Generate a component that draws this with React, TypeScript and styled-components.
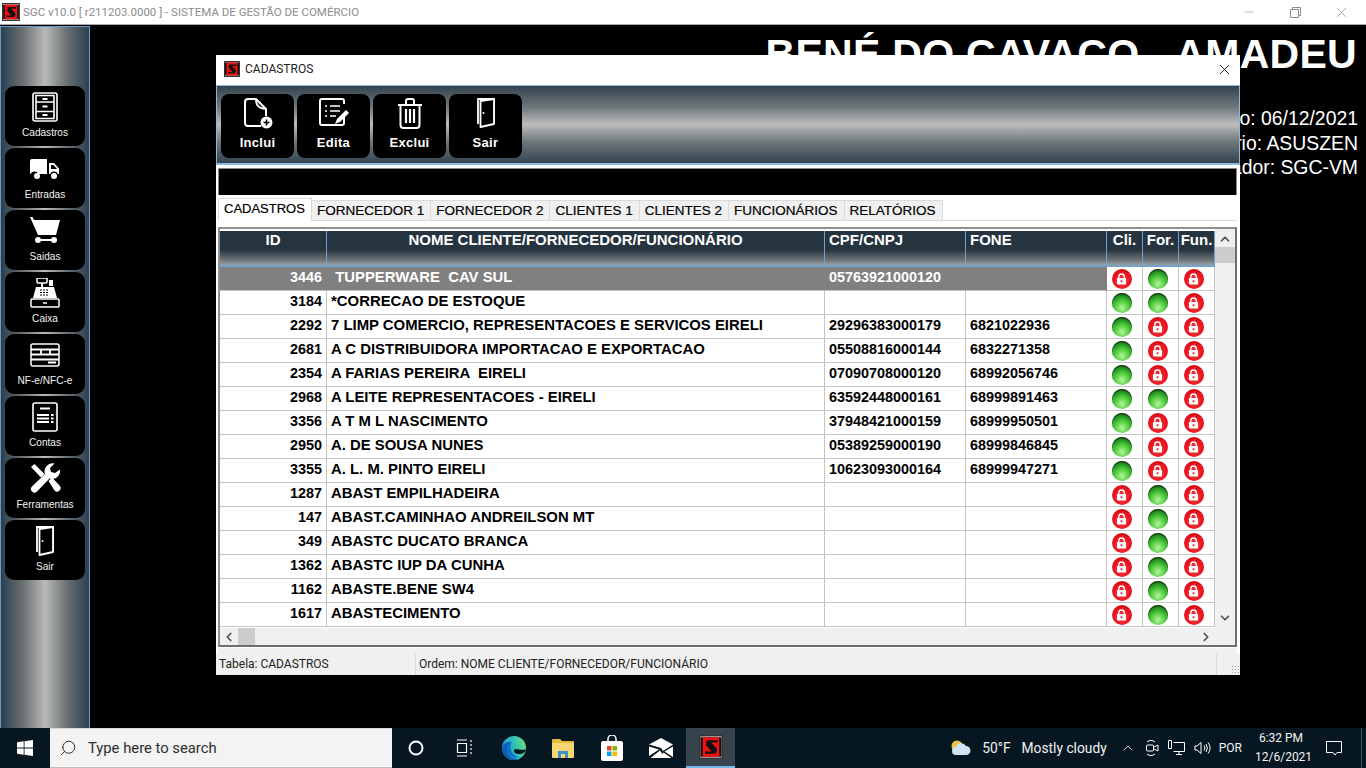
import React from 'react';
import styled, { createGlobalStyle } from 'styled-components';
import { Search, ChevronUp, ChevronDown, ChevronLeft, ChevronRight, X, Minus } from 'lucide-react';

const GlobalStyle = createGlobalStyle`
    html, body {
        margin: 0;
        padding: 0;
        background: #000;
        overflow: hidden;
    }
    * {
        box-sizing: border-box;
    }
`;

const Screen = styled.div`
    width: 1366px;
    height: 768px;
    display: flex;
    flex-direction: column;
    position: relative;
    overflow: hidden;
    font-family: 'Liberation Sans', Arial, sans-serif;
`;

const AppTitleBar = styled.div`
    height: 25px;
    flex: none;
    display: flex;
    align-items: center;
    background: #fff;
    border-bottom: 1px solid #a9a9a9;
    padding-left: 2px;
`;

const AppTitle = styled.span`
    font-family: Roboto, sans-serif;
    font-size: 11.5px;
    color: #8c8c8c;
    margin-left: 3px;
    flex: 1;
    white-space: nowrap;
`;

const WinControls = styled.div`
    display: flex;
    align-items: center;
    color: #8c8c8c;
    margin-right: 2px;
`;

const WinControl = styled.span`
    width: 46px;
    height: 20px;
    display: flex;
    align-items: center;
    justify-content: center;
`;

const Desktop = styled.div`
    flex: 1;
    display: flex;
    background: #000;
    min-height: 0;
`;

const Sidebar = styled.div`
    width: 90px;
    flex: none;
    margin-top: 1px;
    padding: 59px 4px 0 5px;
    display: flex;
    flex-direction: column;
    gap: 2px;
    border: 1px solid #6b9ac4;
    border-width: 1px 1px 0 1px;
    background: linear-gradient(90deg, #2b3f50 0%, #6a7072 25%, #b9b9b9 50%, #6a7072 75%, #2b3f50 100%);
`;

const SideButton = styled.div`
    width: 80px;
    height: 60px;
    margin-left: -1px;
    flex: none;
    background: #000;
    border-radius: 9px;
    color: #fff;
    display: flex;
    flex-direction: column;
    align-items: center;
    padding-top: 5px;
`;

const SideIcon = styled.div`
    height: 31px;
    display: flex;
    align-items: center;
    justify-content: center;
`;

const SideLabel = styled.span`
    font-size: 10.1px;
    line-height: 12px;
    margin-top: 5px;
    color: #f2f2f2;
    white-space: nowrap;
`;

const Backdrop = styled.div`
    flex: 1;
    display: flex;
    flex-direction: column;
    align-items: flex-end;
    padding: 2px 9px 0 0;
    color: #fff;
`;

const Company = styled.div`
    font-size: 41px;
    line-height: 54px;
    font-weight: bold;
    letter-spacing: 0.3px;
    white-space: nowrap;
    margin-bottom: 25px;
`;

const InfoLine = styled.div`
    font-size: 19.4px;
    line-height: 24.5px;
    white-space: nowrap;
    margin-right: -1px;
`;

const Win = styled.div`
    position: absolute;
    left: 216px;
    top: 55px;
    width: 1024px;
    height: 620px;
    background: #f0f0f0;
    display: flex;
    flex-direction: column;
`;

const WinTitle = styled.div`
    height: 30px;
    flex: none;
    background: #fff;
    display: flex;
    align-items: center;
    padding: 0 7px 2px 8px;
    font-family: Roboto, sans-serif;
    font-size: 12px;
    color: #222;
    gap: 5px;
    span {
        flex: 1;
    }
`;

const Toolbar = styled.div`
    height: 80px;
    flex: none;
    display: flex;
    gap: 3px;
    padding: 8px 0 0 4px;
    border: 1px solid #8fb7d8;
    border-width: 1px 1px 2px 1px;
    background: linear-gradient(180deg, #33444f 0%, #70787c 28%, #bdbdbd 50%, #70787c 72%, #33444f 100%);
`;

const ToolButton = styled.div`
    width: 73px;
    height: 64px;
    background: #000;
    border-radius: 8px;
    color: #fff;
    display: flex;
    flex-direction: column;
    align-items: center;
    padding-top: 4px;
`;

const ToolIcon = styled.div`
    height: 32px;
    display: flex;
    justify-content: center;
`;

const ToolLabel = styled.span`
    font-size: 13px;
    font-weight: bold;
    line-height: 15px;
    margin-top: 5px;
    letter-spacing: 0.3px;
`;

const WinBody = styled.div`
    flex: 1;
    display: flex;
    flex-direction: column;
    background: #fff;
    padding: 3px 3px 0 2px;
    min-height: 0;
`;

const BlackBar = styled.div`
    height: 27px;
    flex: none;
    background: #000;
    border: 1px solid #8a8a8a;
    border-bottom: none;
`;

const Tabs = styled.div`
    display: flex;
    align-items: flex-end;
    height: 25px;
    flex: none;
`;

const Tab = styled.div<{ $active?: boolean }>`
    height: ${(p) => (p.$active ? '23px' : '20px')};
    padding: ${(p) => (p.$active ? '0 6px 3px 5px' : '0 6px 0 5px')};
    margin-bottom: ${(p) => (p.$active ? '-1px' : '0')};
    position: relative;
    display: flex;
    align-items: center;
    font-size: ${(p) => (p.$active ? '13px' : '13.5px')};
    -webkit-text-stroke: 0.2px #000;
    color: #000;
    white-space: nowrap;
    background: ${(p) => (p.$active ? '#fff' : '#f0f0f0')};
    border: 1px solid #d9d9d9;
    border-width: ${(p) => (p.$active ? '1px 1px 0 1px' : '1px 1px 0 0')};
`;

const TabPage = styled.div`
    flex: 1;
    border-top: 1px solid #d9d9d9;
    padding-top: 6px;
    display: flex;
    flex-direction: column;
    min-height: 0;
    background: linear-gradient(#fff 0 6px, #f0f0f0 6px);
`;

const GridFrame = styled.div`
    height: 420px;
    flex: none;
    background: #fff;
    border: 2px solid #8f8f8f;
    border-right-color: #6e6e6e;
    border-bottom-color: #6e6e6e;
    box-shadow: 1px 1px 0 #fff;
    display: grid;
    grid-template-columns: 1fr 20px;
    grid-template-rows: 1fr 17px;
    overflow: hidden;
`;

const GridMain = styled.div`
    padding-top: 2px;
    overflow: hidden;
`;

const Columns = styled.div`
    display: grid;
    grid-template-columns: 107px 498px 141px 141px 36px 36px 36px;
`;

const HeadCell = styled.div<{ $center?: boolean }>`
    height: 36px;
    background: linear-gradient(180deg, #25343f 0%, #25343f 55%, #6d7479 85%, #9a9fa2 100%);
    border-right: 1px solid #74a2cc;
    border-bottom: 2px solid #74a2cc;
    color: #fff;
    font-size: 15px;
    font-weight: bold;
    line-height: 18px;
    padding-left: ${(p) => (p.$center ? '0' : '4px')};
    text-align: ${(p) => (p.$center ? 'center' : 'left')};
    white-space: nowrap;
    overflow: hidden;
`;

const Cell = styled.div<{ $selected?: boolean; $right?: boolean; $wide?: boolean }>`
    height: 24px;
    padding: ${(p) => (p.$right ? '0 4px 0 0' : '0 0 0 4px')};
    text-align: ${(p) => (p.$right ? 'right' : 'left')};
    background: ${(p) => (p.$selected ? '#808080' : '#fff')};
    color: ${(p) => (p.$selected ? '#fff' : '#000')};
    border-right: 1px solid ${(p) => (p.$selected ? '#808080' : '#c4c4c4')};
    border-bottom: 1px solid #c4c4c4;
    font-size: ${(p) => (p.$wide ? '14.9px' : '14.4px')};
    font-weight: bold;
    line-height: 20px;
    white-space: pre;
    overflow: hidden;
`;

const OrbCell = styled.div`
    height: 24px;
    padding-right: 6px;
    border-right: 1px solid #c4c4c4;
    border-bottom: 1px solid #c4c4c4;
    display: flex;
    align-items: center;
    justify-content: center;
`;

const Orb = styled.span<{ $on: boolean }>`
    width: 20px;
    height: 20px;
    border-radius: 50%;
    display: flex;
    align-items: center;
    justify-content: center;
    background: ${(p) =>
        p.$on
            ? 'radial-gradient(circle at 50% 75%, #b8f7a0 0%, #62d44a 32%, #2ea825 58%, #187018 78%, #14301a 100%)'
            : 'radial-gradient(circle at 50% 62%, #f53a3a 0%, #e8101c 62%, #a8000a 100%)'};
    box-shadow: ${(p) => (p.$on ? 'inset 0 1px 1px #1a2a1a' : 'none')};
`;

const VScroll = styled.div`
    grid-row: 1;
    grid-column: 2;
    background: #f0f0f0;
    display: flex;
    flex-direction: column;
    align-items: center;
    color: #505050;
    padding: 2px 0;
`;

const ScrollArrow = styled.div`
    height: 16px;
    display: flex;
    align-items: center;
    justify-content: center;
    flex: none;
`;

const VThumb = styled.div`
    width: 100%;
    height: 16px;
    background: #cdcdcd;
    flex: none;
`;

const VTrack = styled.div`
    flex: 1;
`;

const HScroll = styled.div`
    grid-row: 2;
    grid-column: 1;
    background: #f0f0f0;
    display: flex;
    align-items: center;
    color: #505050;
`;

const HArrow = styled.div`
    width: 18px;
    display: flex;
    justify-content: center;
    flex: none;
`;

const HThumb = styled.div`
    width: 17px;
    height: 100%;
    background: #cdcdcd;
    flex: none;
`;

const Corner = styled.div`
    grid-row: 2;
    grid-column: 2;
    background: #f0f0f0;
`;

const StatusBar = styled.div`
    height: 21px;
    flex: none;
    margin: 7px -3px 0 -2px;
    background: #f0f0f0;
    display: flex;
    font-family: Roboto, sans-serif;
    font-size: 12px;
    color: #222;
`;

const StatusPane = styled.div<{ $width?: number }>`
    ${(p) => (p.$width ? `width: ${p.$width}px;` : 'flex: 1;')}
    flex-shrink: 0;
    display: flex;
    align-items: center;
    padding: 0 0 1px 3px;
    border-right: 1px solid #d9d9d9;
    white-space: nowrap;
`;

const Grip = styled.div`
    flex: 1;
    position: relative;
    &::after {
        content: '';
        position: absolute;
        right: 1px;
        bottom: 2px;
        width: 8px;
        height: 8px;
        background: radial-gradient(circle, #a5a5a5 1px, transparent 1px) 0 0 / 3px 3px;
    }
`;

const Taskbar = styled.div`
    height: 40px;
    flex: none;
    background: #071721;
    display: flex;
    align-items: center;
    color: #fff;
`;

const StartButton = styled.div`
    width: 50px;
    height: 40px;
    display: flex;
    align-items: center;
    justify-content: center;
`;

const SearchBox = styled.div`
    width: 342px;
    height: 40px;
    margin-right: -1px;
    background: #f3f3f3;
    border-bottom: 1px solid #bdbdbd;
    border-top: 1px solid #d8d8d8;
    display: flex;
    align-items: center;
    gap: 11px;
    padding-left: 9px;
    color: #2d2d2d;
    font-family: Roboto, sans-serif;
    font-size: 14.8px;
`;

const TaskIcon = styled.div<{ $active?: boolean }>`
    width: 49px;
    height: 40px;
    margin-left: ${(p) => (p.$active ? '1px' : '0')};
    display: flex;
    align-items: center;
    justify-content: center;
    background: ${(p) => (p.$active ? '#37444d' : 'transparent')};
    border-bottom: ${(p) => (p.$active ? '2px solid #76b9ed' : 'none')};
`;

const Tray = styled.div`
    margin-left: auto;
    display: flex;
    align-items: center;
    font-family: Roboto, sans-serif;
    font-size: 13.8px;
    color: #f2f2f2;
    height: 40px;
`;

const Weather = styled.div`
    display: flex;
    align-items: center;
    white-space: nowrap;
    gap: 11px;
    margin-right: 13px;
`;

const TrayIcons = styled.div`
    display: flex;
    align-items: center;
    gap: 9px;
    margin-right: 8px;
`;

const Lang = styled.span`
    font-size: 12px;
    margin-right: 13px;
`;

const Clock = styled.div`
    font-size: 12px;
    line-height: 19px;
    text-align: center;
    width: 52px;
`;

const Notify = styled.div`
    width: 54px;
    display: flex;
    justify-content: center;
`;

const ShowDesktop = styled.div`
    width: 5px;
    height: 40px;
    border-left: 1px solid #4a5860;
`;

const Logo = ({ size = 16 }: { size?: number }) => (
    <svg width={size} height={size} viewBox="0 0 16 16">
        <rect x="0.5" y="0.5" width="15" height="15" fill="#fff" stroke="#333" />
        <rect x="1" y="1.500" width="14" height="13" fill="#111" />
        <rect x="2.500" y="1.500" width="11" height="13" fill="#f01010" />
        <path d="M5.500 3.500H12.500v1.500H8.200L11.800 9v2l-1.200 1.500H4V11h4.300L4.800 7V4.500z" fill="#111" />
    </svg>
);

const Door = ({ height = 30 }: { height?: number }) => (
    <svg width={height * 0.6} height={height} viewBox="0 0 18 30" fill="none" stroke="#fff" strokeWidth="1.800">
        <path d="M1 26V1h16v25" />
        <path d="M3.500 3 17 1v25L3.500 29z" fill="#000" strokeLinejoin="round" />
        <circle cx="6.500" cy="15" r="1" fill="#fff" stroke="none" />
    </svg>
);

const IconCadastros = () => (
    <svg width="26" height="30" viewBox="0 0 26 30" fill="none" stroke="#fff" strokeWidth="1.6">
        <rect x="1" y="1" width="24" height="28" rx="2" />
        <path d="M4 10h18M4 19.500h18M4 3.500h18v23H4z" />
        <path d="M10.500 7h5M10.500 14.500h5M10.500 23h5" strokeWidth="2" />
    </svg>
);

const IconTruck = () => (
    <svg width="30" height="22" viewBox="0 0 30 22" fill="#fff">
        <path d="M0 3a2 2 0 0 1 2-2h15v15H8.500a4.500 4.500 0 0 0-8 0H0z" />
        <path d="M19 5h5l5 5.500V16h-1a4.500 4.500 0 0 0-8 0h-1zM21 7v4h6l-3.500-4z" fillRule="evenodd" />
        <circle cx="7" cy="18" r="3" />
        <circle cx="24" cy="18" r="3" />
    </svg>
);

const IconCart = () => (
    <svg width="30" height="27" viewBox="0 0 30 27" fill="#fff">
        <path d="M0 0h2.500l1.500 3h26l-4 15H8z" />
        <path d="M8 23h16" stroke="#fff" strokeWidth="2" />
        <circle cx="8" cy="23" r="3" />
        <circle cx="24" cy="23" r="3" />
    </svg>
);

const IconRegister = () => (
    <svg width="30" height="30" viewBox="0 0 30 30" fill="#fff">
        <rect x="7" y="0" width="10" height="5" rx="1" fill="none" stroke="#fff" strokeWidth="1.500" />
        <rect x="19" y="2" width="4" height="6" />
        <rect x="11" y="5" width="2" height="4" />
        <path d="M6 9h18l3 11H3z" />
        <path d="M10 12h2M13 12h2M16 12h2M10 14.500h2M13 14.500h2M16 14.500h2M10 17h2M13 17h2M16 17h2" stroke="#000" strokeWidth="1" />
        <rect x="1" y="21" width="28" height="8" rx="1" fill="none" stroke="#fff" strokeWidth="1.500" />
        <path d="M13 25h4" stroke="#fff" strokeWidth="1.500" />
    </svg>
);

const IconInvoice = () => (
    <svg width="30" height="24" viewBox="0 0 30 24" fill="none" stroke="#fff" strokeWidth="1.500">
        <rect x="1" y="1" width="28" height="22" rx="2" />
        <path d="M1 6.500h28M1 11.500h28M1 16.500h28M11 6.500v5M20 6.500v5" strokeWidth="1.800" />
        <rect x="18" y="18.500" width="8" height="2" fill="#fff" stroke="none" />
    </svg>
);

const IconContas = () => (
    <svg width="26" height="30" viewBox="0 0 26 30" fill="none" stroke="#fff" strokeWidth="1.6">
        <rect x="1" y="1" width="24" height="28" rx="2" />
        <path d="M8 6.500h10M5 13h12M5 16.500h12M5 20h12M19 13h2.500M19 16.500h2.500M19 20h2.500" strokeWidth="2" />
    </svg>
);

const IconTools = () => (
    <svg width="31" height="31" viewBox="0 0 31 31" fill="#fff">
        <path d="M30 6.500a8 8 0 0 1-10.500 9L7 28.500a3.500 3.500 0 0 1-5-5L15 11A8 8 0 0 1 24.500.5L20 5l1 4 4 1z" />
        <path d="M1 4 4.500 1l10 10-3.500 3.500zM18.500 18l3.500-3.500 7.500 8a3.500 3.500 0 0 1-5 5z" />
    </svg>
);

const IconNew = () => (
    <svg width="32" height="32" viewBox="0 0 32 32" fill="none" stroke="#fff" strokeWidth="2">
        <path d="M19 28H6a3 3 0 0 1-3-3V4a3 3 0 0 1 3-3h8l10 10v7" />
        <path d="M14 1c0 6 2 9 10 10" />
        <circle cx="24.500" cy="24.500" r="6" fill="#fff" stroke="none" />
        <path d="M24.500 21.500v6M21.500 24.500h6" stroke="#000" strokeWidth="1.6" />
    </svg>
);

const IconEdit = () => (
    <svg width="32" height="31" viewBox="0 0 32 31" fill="none" stroke="#fff" strokeWidth="2">
        <path d="M26 18v7a2 2 0 0 1-2 2H4a2 2 0 0 1-2-2V3a2 2 0 0 1 2-2h20a2 2 0 0 1 2 2v3" />
        <path d="M7 8h2M12 8h10M7 13h2M12 13h10M7 18h2M12 18h6" strokeWidth="1.700" />
        <path d="M17 26l2-5 9-9 3 3-9 9z" fill="#fff" stroke="none" />
    </svg>
);

const IconTrash = () => (
    <svg width="26" height="31" viewBox="0 0 26 31" fill="none" stroke="#fff" strokeWidth="2">
        <path d="M1 7h24M9 7V3a2 2 0 0 1 2-2h4a2 2 0 0 1 2 2v4" />
        <path d="M3.500 7v20a3 3 0 0 0 3 3h13a3 3 0 0 0 3-3V7" />
        <path d="M9 11v14M13 11v14M17 11v14" strokeWidth="2.200" />
    </svg>
);

const LockGlyph = () => (
    <svg width="11" height="12" viewBox="0 0 12 13">
        <path d="M3 6V4a3 3 0 0 1 6 0v2" fill="none" stroke="#fff" strokeWidth="1.500" />
        <rect x="1" y="5.500" width="10" height="7" rx="1" fill="#fff" />
        <circle cx="6" cy="9" r="1.100" fill="#e4141e" />
    </svg>
);

const WindowsLogo = () => (
    <svg width="16" height="16" viewBox="0 0 16 16" fill="#fff">
        <path d="M0 2.300 6.700 1.300v6.300H0zM7.500 1.200 16 0v7.600H7.500zM0 8.400h6.700v6.300L0 13.700zM7.500 8.400H16V16l-8.500-1.200z" />
    </svg>
);

const Edge = () => (
    <svg width="24" height="24" viewBox="0 0 24 24">
        <defs>
            <linearGradient id="edgeTop" x1="0" y1="0.600" x2="1" y2="0.300">
                <stop offset="0" stopColor="#1b9de2" />
                <stop offset="0.600" stopColor="#33c4b0" />
                <stop offset="1" stopColor="#6fdc7a" />
            </linearGradient>
        </defs>
        <circle cx="12" cy="12" r="12" fill="url(#edgeTop)" />
        <path d="M24 13.500c-.5 2.500-3 4.500-7 4.500-3 0-5-1-5-3 0-1 .5-1.500 1-2 4 .5 8 1 11 .5z" fill="#071721" />
        <path d="M0 12C1 7 6 5 10 6 6.500 7 5 10 5 13.500 5 19 10 23 15.500 23c2 0 3.500-.5 5-1.500A12 12 0 0 1 12 24 12 12 0 0 1 0 12z" fill="#0d5fb3" />
        <path d="M5 13.500C5 10 6.500 7 10 6c-1.500 2-2 5-1 8 1 3 4 6.500 8 7-1 .5-1.500.5-2 .5C10 22 5 18.500 5 13.500z" fill="#1170c8" />
    </svg>
);

const Explorer = () => (
    <svg width="22" height="20" viewBox="0 0 22 20">
        <path d="M0 2a1 1 0 0 1 1-1h7l2 2h11a1 1 0 0 1 1 1v2H0z" fill="#e8b93a" />
        <rect x="0" y="5" width="22" height="15" rx="1" fill="#f7d774" />
        <path d="M6 13h10v7h-3v-4H9v4H6z" fill="#3f8fc9" />
    </svg>
);

const Store = () => (
    <svg width="22" height="26" viewBox="0 0 22 26">
        <path d="M7 6V4a4 4 0 0 1 8 0v2" fill="none" stroke="#fff" strokeWidth="1.500" />
        <rect x="0" y="6" width="22" height="20" rx="2" fill="#fff" />
        <rect x="6" y="11" width="4.500" height="4.500" fill="#e2492b" />
        <rect x="11.500" y="11" width="4.500" height="4.500" fill="#7fba00" />
        <rect x="6" y="16.500" width="4.500" height="4.500" fill="#00a4ef" />
        <rect x="11.500" y="16.500" width="4.500" height="4.500" fill="#ffb900" />
    </svg>
);

const Mail = () => (
    <svg width="24" height="20" viewBox="0 0 24 20" fill="#fff">
        <path d="M12 0 24 6.500 14 13 12 10 0 6.500z" />
        <path d="M0 8.500 10 11.500 0 18zM24 8.500V19L15.500 13.500zM11 12.500 13.500 16 14.500 14.500 22.500 20H1.500z" />
    </svg>
);

const Cloud = () => (
    <svg width="21" height="16" viewBox="0 0 21 16">
        <circle cx="7" cy="6" r="5.500" fill="#f2c14b" />
        <path d="M6 15a4 4 0 0 1 0-8 5.500 5.500 0 0 1 10-1 4.500 4.500 0 0 1 0 9z" fill="#cfe4f5" />
    </svg>
);

const sideItems: { label: string; icon: React.ReactNode }[] = [
    { label: 'Cadastros', icon: <IconCadastros /> },
    { label: 'Entradas', icon: <IconTruck /> },
    { label: 'Saidas', icon: <IconCart /> },
    { label: 'Caixa', icon: <IconRegister /> },
    { label: 'NF-e/NFC-e', icon: <IconInvoice /> },
    { label: 'Contas', icon: <IconContas /> },
    { label: 'Ferramentas', icon: <IconTools /> },
    { label: 'Sair', icon: <Door /> },
];

const toolItems: { label: string; icon: React.ReactNode }[] = [
    { label: 'Inclui', icon: <IconNew /> },
    { label: 'Edita', icon: <IconEdit /> },
    { label: 'Exclui', icon: <IconTrash /> },
    { label: 'Sair', icon: <Door /> },
];

const tabs = ['CADASTROS', 'FORNECEDOR 1', 'FORNECEDOR 2', 'CLIENTES 1', 'CLIENTES 2', 'FUNCIONÁRIOS', 'RELATÓRIOS'];

const rows: [string, string, string, string, string][] = [
    ['3446', ' TUPPERWARE  CAV SUL', '05763921000120', '', 'RGR'],
    ['3184', '*CORRECAO DE ESTOQUE', '', '', 'GGR'],
    ['2292', '7 LIMP COMERCIO, REPRESENTACOES E SERVICOS EIRELI', '29296383000179', '6821022936', 'GRR'],
    ['2681', 'A C DISTRIBUIDORA IMPORTACAO E EXPORTACAO', '05508816000144', '6832271358', 'GRR'],
    ['2354', 'A FARIAS PEREIRA  EIRELI', '07090708000120', '68992056746', 'GRR'],
    ['2968', 'A LEITE REPRESENTACOES - EIRELI', '63592448000161', '68999891463', 'GGR'],
    ['3356', 'A T M L NASCIMENTO', '37948421000159', '68999950501', 'GRR'],
    ['2950', 'A. DE SOUSA NUNES', '05389259000190', '68999846845', 'GRR'],
    ['3355', 'A. L. M. PINTO EIRELI', '10623093000164', '68999947271', 'GRR'],
    ['1287', 'ABAST EMPILHADEIRA', '', '', 'RGR'],
    ['147', 'ABAST.CAMINHAO ANDREILSON MT', '', '', 'RGR'],
    ['349', 'ABASTC DUCATO BRANCA', '', '', 'RGR'],
    ['1362', 'ABASTC IUP DA CUNHA', '', '', 'RGR'],
    ['1162', 'ABASTE.BENE SW4', '', '', 'RGR'],
    ['1617', 'ABASTECIMENTO', '', '', 'RGR'],
];

function App() {
    return (
        <Screen>
            <GlobalStyle />
            <AppTitleBar>
                <Logo size={18} />
                <AppTitle>SGC v10.0 [ r211203.0000 ] - SISTEMA DE GESTÃO DE COMÉRCIO</AppTitle>
                <WinControls>
                    <WinControl><Minus size={14} strokeWidth={1} /></WinControl>
                    <WinControl>
                        <svg width="11" height="11" viewBox="0 0 11 11" fill="none" stroke="#8c8c8c">
                            <path d="M.5 2.500h8v8h-8zM2.500 2.500v-2h8v8h-2" />
                        </svg>
                    </WinControl>
                    <WinControl><X size={17} strokeWidth={1} /></WinControl>
                </WinControls>
            </AppTitleBar>
            <Desktop>
                <Sidebar>
                    {sideItems.map((item) => (
                        <SideButton key={item.label}>
                            <SideIcon>{item.icon}</SideIcon>
                            <SideLabel>{item.label}</SideLabel>
                        </SideButton>
                    ))}
                </Sidebar>
                <Backdrop>
                    <Company>BENÉ DO CAVACO - AMADEU</Company>
                    <InfoLine>Movimento: 06/12/2021</InfoLine>
                    <InfoLine>Usuário: ASUSZEN</InfoLine>
                    <InfoLine>Computador: SGC-VM</InfoLine>
                </Backdrop>
            </Desktop>
            <Win>
                <WinTitle>
                    <Logo />
                    <span>CADASTROS</span>
                    <X size={17} strokeWidth={1.2} color="#000" />
                </WinTitle>
                <Toolbar>
                    {toolItems.map((item) => (
                        <ToolButton key={item.label}>
                            <ToolIcon>{item.icon}</ToolIcon>
                            <ToolLabel>{item.label}</ToolLabel>
                        </ToolButton>
                    ))}
                </Toolbar>
                <WinBody>
                    <BlackBar />
                    <Tabs>
                        {tabs.map((t, i) => (
                            <Tab key={t} $active={i === 0}>{t}</Tab>
                        ))}
                    </Tabs>
                    <TabPage>
                        <GridFrame>
                            <GridMain>
                                <Columns>
                                    <HeadCell $center>ID</HeadCell>
                                    <HeadCell $center>NOME CLIENTE/FORNECEDOR/FUNCIONÁRIO</HeadCell>
                                    <HeadCell>CPF/CNPJ</HeadCell>
                                    <HeadCell>FONE</HeadCell>
                                    <HeadCell $center>Cli.</HeadCell>
                                    <HeadCell $center>For.</HeadCell>
                                    <HeadCell $center>Fun.</HeadCell>
                                    {rows.map((r, i) => (
                                        <React.Fragment key={r[0]}>
                                            <Cell $right $selected={i === 0}>{r[0]}</Cell>
                                            <Cell $wide $selected={i === 0}>{r[1]}</Cell>
                                            <Cell $selected={i === 0}>{r[2]}</Cell>
                                            <Cell $selected={i === 0}>{r[3]}</Cell>
                                            {r[4].split('').map((s, j) => (
                                                <OrbCell key={j}>
                                                    <Orb $on={s === 'G'}>{s === 'R' && <LockGlyph />}</Orb>
                                                </OrbCell>
                                            ))}
                                        </React.Fragment>
                                    ))}
                                </Columns>
                            </GridMain>
                            <VScroll>
                                <ScrollArrow><ChevronUp size={14} strokeWidth={3} /></ScrollArrow>
                                <VThumb />
                                <VTrack />
                                <ScrollArrow><ChevronDown size={14} strokeWidth={3} /></ScrollArrow>
                            </VScroll>
                            <HScroll>
                                <HArrow><ChevronLeft size={14} strokeWidth={3} /></HArrow>
                                <HThumb />
                                <VTrack />
                                <HArrow><ChevronRight size={14} strokeWidth={3} /></HArrow>
                            </HScroll>
                            <Corner />
                        </GridFrame>
                        <StatusBar>
                            <StatusPane $width={200}>Tabela: CADASTROS</StatusPane>
                            <StatusPane $width={801}>Ordem: NOME CLIENTE/FORNECEDOR/FUNCIONÁRIO</StatusPane>
                            <Grip />
                        </StatusBar>
                    </TabPage>
                </WinBody>
            </Win>
            <Taskbar>
                <StartButton><WindowsLogo /></StartButton>
                <SearchBox>
                    <Search size={18} strokeWidth={1.3} style={{ transform: 'scaleX(-1)' }} />
                    Type here to search
                </SearchBox>
                <TaskIcon>
                    <svg width="16" height="16" viewBox="0 0 16 16" fill="none" stroke="#fff" strokeWidth="2">
                        <circle cx="8" cy="8" r="6.500" />
                    </svg>
                </TaskIcon>
                <TaskIcon>
                    <svg width="18" height="18" viewBox="0 0 18 18" fill="none" stroke="#fff" strokeWidth="1.200">
                        <path d="M1 1h10M1 17h10M1.500 4.500h9v9h-9zM15 1v2M15 5v2M15 9v2M15 13v2" />
                    </svg>
                </TaskIcon>
                <TaskIcon><Edge /></TaskIcon>
                <TaskIcon><Explorer /></TaskIcon>
                <TaskIcon><Store /></TaskIcon>
                <TaskIcon><Mail /></TaskIcon>
                <TaskIcon $active><Logo size={24} /></TaskIcon>
                <Tray>
                    <Weather>
                        <Cloud />
                        <span>50°F</span>
                        <span>Mostly cloudy</span>
                    </Weather>
                    <TrayIcons>
                        <ChevronUp size={16} strokeWidth={1.2} />
                        <svg width="14" height="18" viewBox="0 0 14 18" fill="none" stroke="#fff">
                            <path d="M2 3a6 6 0 0 1 8 0M2 15a6 6 0 0 0 8 0" />
                            <rect x="1.500" y="6" width="7" height="6" rx="1" />
                            <path d="M9 8l4-2v6l-4-2" />
                        </svg>
                        <svg width="17" height="16" viewBox="0 0 17 16" fill="none" stroke="#fff">
                            <path d="M5.500 2.500h11v9h-11M8 14.500h6M11 11.500v3M.5.500h3v8h-3z" />
                        </svg>
                        <svg width="17" height="14" viewBox="0 0 17 14" fill="none" stroke="#fff">
                            <path d="M1 5v4h2l4 3.500v-11L3 5zM10 4.500a4 4 0 0 1 0 5M12 3a7 7 0 0 1 0 8M14 1.500a9 9 0 0 1 0 11" />
                        </svg>
                    </TrayIcons>
                    <Lang>POR</Lang>
                    <Clock>
                        <div>6:32 PM</div>
                        <div>12/6/2021</div>
                    </Clock>
                    <Notify>
                        <svg width="16" height="16" viewBox="0 0 16 16" fill="none" stroke="#fff">
                            <path d="M.5 1.500h15v11H11l-2 2.500-2-2.500H.5z" />
                        </svg>
                    </Notify>
                    <ShowDesktop />
                </Tray>
            </Taskbar>
        </Screen>
    );
}

export default App;
